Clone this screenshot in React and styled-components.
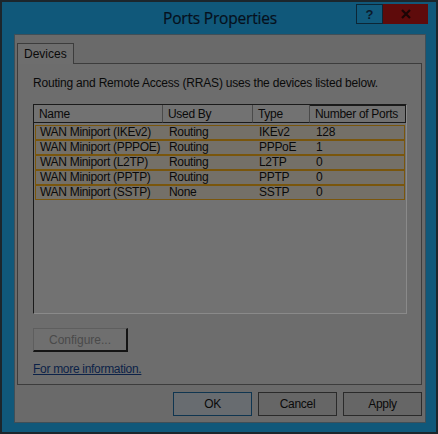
import React from "react";
import styled, { createGlobalStyle } from "styled-components";

const GlobalStyle = createGlobalStyle`
  body {
    margin: 0;
    background: #1c262c;
    font-family: "Liberation Sans", Arial, sans-serif;
  }
`;

const ports = [
  { name: "WAN Miniport (IKEv2)", usedBy: "Routing", type: "IKEv2", count: "128" },
  { name: "WAN Miniport (PPPOE)", usedBy: "Routing", type: "PPPoE", count: "1" },
  { name: "WAN Miniport (L2TP)", usedBy: "Routing", type: "L2TP", count: "0" },
  { name: "WAN Miniport (PPTP)", usedBy: "Routing", type: "PPTP", count: "0" },
  { name: "WAN Miniport (SSTP)", usedBy: "None", type: "SSTP", count: "0" },
];

const columns = ["129px", "90px", "57px", "1fr"];

const App = () => {
  return (
    <>
      <GlobalStyle />
      <Window>
        <TitleBar>
          <Title>Ports Properties</Title>
          <Controls>
            <HelpButton>?</HelpButton>
            <CloseButton>
              <svg width="10" height="10" viewBox="0 0 10 10">
                <path d="M1 1 L9 9 M9 1 L1 9" stroke="#1a0505" strokeWidth="2.2" />
              </svg>
            </CloseButton>
          </Controls>
        </TitleBar>
        <Body>
          <Tabs>
            <Tab>Devices</Tab>
          </Tabs>
          <Panel>
            <Intro>Routing and Remote Access (RRAS) uses the devices listed below.</Intro>
            <List>
              <Header>
                <HeadCell>Name</HeadCell>
                <HeadCell>Used By</HeadCell>
                <HeadCell>Type</HeadCell>
                <HeadCell $last>Number of Ports</HeadCell>
              </Header>
              {ports.map((p) => (
                <Row key={p.name}>
                  <Cell>{p.name}</Cell>
                  <Cell>{p.usedBy}</Cell>
                  <Cell>{p.type}</Cell>
                  <Cell>{p.count}</Cell>
                </Row>
              ))}
            </List>
            <ConfigureButton disabled>Configure...</ConfigureButton>
            <MoreLink href="#">For more information.</MoreLink>
          </Panel>
          <Footer>
            <DialogButton $default>OK</DialogButton>
            <DialogButton>Cancel</DialogButton>
            <DialogButton>Apply</DialogButton>
          </Footer>
        </Body>
      </Window>
    </>
  );
};

const Window = styled.div`
  width: 438px;
  height: 434px;
  box-sizing: border-box;
  border: 2px solid #1c262c;
  background: #10587a;
  padding: 0 10px 9px 12px;
  display: flex;
  flex-direction: column;
`;

const TitleBar = styled.div`
  height: 32px;
  position: relative;
  display: flex;
  align-items: center;
  justify-content: center;
`;

const Title = styled.div`
  font-family: "Open Sans", "Noto Sans", sans-serif;
  font-size: 15.5px;
  color: #06101c;
  letter-spacing: -0.2px;
  -webkit-text-stroke: 0.2px #06101c;
`;

const Controls = styled.div`
  position: absolute;
  top: 2px;
  right: -2px;
  display: flex;
`;

const HelpButton = styled.div`
  width: 27px;
  height: 20px;
  box-sizing: border-box;
  border: 1px solid #0c2636;
  background: #115a7c;
  color: #0b1a2c;
  font-weight: bold;
  font-size: 13px;
  display: flex;
  align-items: center;
  justify-content: center;
`;

const CloseButton = styled.div`
  width: 45px;
  height: 20px;
  background: #5e0b0b;
  display: flex;
  align-items: center;
  justify-content: center;
`;

const Body = styled.div`
  flex: 1;
  background: #6a6a6a;
  border: 1px solid #3f4f58;
  padding: 8px 3px 6px 2px;
  display: flex;
  flex-direction: column;
  font-size: 12px;
  color: #0a0a0a;
`;

const Tabs = styled.div`
  display: flex;
  height: 20px;
  position: relative;
  z-index: 1;
`;

const Tab = styled.div`
  padding: 0 6px;
  width: 57px;
  box-sizing: border-box;
  height: 21px;
  border: 1px solid #3c3c3c;
  border-bottom: none;
  background: #6e6e6e;
  display: flex;
  align-items: center;
  font-size: 12px;
`;

const Panel = styled.div`
  height: 322px;
  box-sizing: border-box;
  border: 1px solid #3c3c3c;
  background: #6d6d6d;
  padding: 12px 14px 0 15px;
  display: flex;
  flex-direction: column;
  align-items: flex-start;
`;

const Intro = styled.div`
  height: 28px;
  letter-spacing: -0.2px;
`;

const List = styled.div`
  width: 374px;
  height: 210px;
  box-sizing: border-box;
  border: 1px solid #1a1a1a;
  border-right-color: #8a8a8a;
  border-bottom-color: #8a8a8a;
  background: #727272;
  display: flex;
  flex-direction: column;
`;

const Header = styled.div`
  display: grid;
  grid-template-columns: ${columns.join(" ")};
  height: 18px;
  margin-bottom: 2px;
`;

const HeadCell = styled.div`
  border-right: 1px solid ${(p) => (p.$last ? "#1a1a1a" : "#4a4a4a")};
  border-bottom: 1px solid #1a1a1a;
  ${(p) => p.$last && "border-top: 1px solid #1a1a1a;"}
  padding-left: 5px;
  display: flex;
  align-items: center;
  letter-spacing: -0.3px;
`;

const Row = styled.div`
  display: grid;
  grid-template-columns: ${columns.join(" ")};
  height: 15px;
  box-sizing: border-box;
  margin: 0 1px;
  border: 1px solid #7a560c;
  background: #747068;
  align-items: center;
`;

const Cell = styled.div`
  padding-left: 4px;
  line-height: 13px;
  letter-spacing: -0.3px;
`;

const ConfigureButton = styled.button`
  margin-top: 14px;
  width: 95px;
  height: 24px;
  box-sizing: border-box;
  border: 1px solid #5e5e5e;
  border-right: 2px solid #141414;
  border-bottom: 2px solid #141414;
  background: #6f6f6f;
  color: #4a4a4a;
  font-family: inherit;
  font-size: 12px;
  padding: 0;
`;

const MoreLink = styled.a`
  margin-top: 10px;
  color: #0c2248;
  font-size: 12px;
  letter-spacing: -0.3px;
  text-decoration: underline;
`;

const Footer = styled.div`
  display: flex;
  justify-content: flex-end;
  gap: 6px;
  margin-top: 7px;
`;

const DialogButton = styled.div`
  width: 79px;
  height: 24px;
  box-sizing: border-box;
  border: 1px solid ${(p) => (p.$default ? "#0f3550" : "#2a2a2a")};
  background: ${(p) => (p.$default ? "#686c70" : "#666666")};
  display: flex;
  align-items: center;
  justify-content: center;
  font-size: 12px;
  letter-spacing: -0.3px;
`;

export default App;
